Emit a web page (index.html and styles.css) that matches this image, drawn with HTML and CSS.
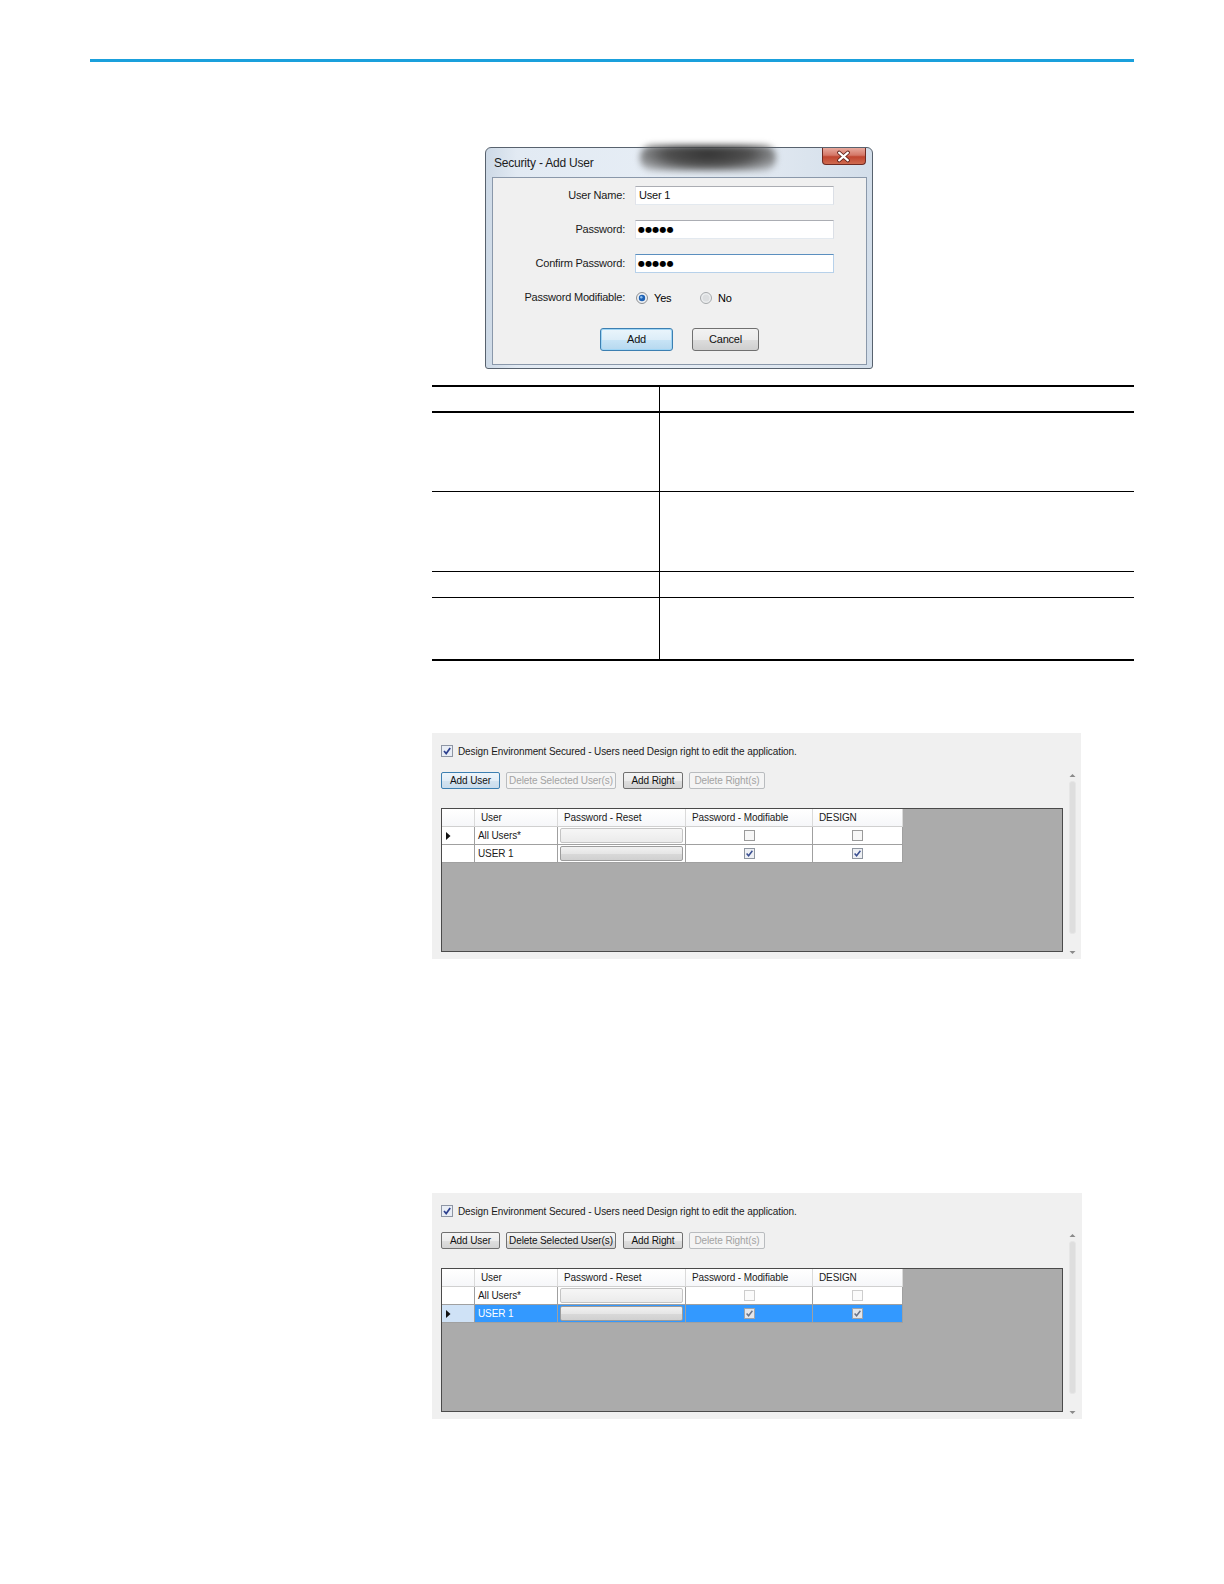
FILE: index.html
```html
<!DOCTYPE html>
<html lang="en">
<head>
<meta charset="utf-8">
<title>Security - Add User</title>
<link rel="stylesheet" href="styles.css">
</head>
<body>
<div class="page">
  <div class="rule"></div>
  <div class="content">

    <div class="dlg">
      <div class="smudge"></div>
      <div class="dlg-title">
        <span class="dlg-caption">Security - Add User</span>
        <div class="dlg-close">
          <svg width="44" height="17" viewBox="0 0 44 17">
            <path d="M17.5 4.5 L26.5 12.5 M26.5 4.5 L17.5 12.5" fill="none" stroke="#5a1e16" stroke-width="4" stroke-linecap="round"/>
            <path d="M17.5 4.5 L26.5 12.5 M26.5 4.5 L17.5 12.5" fill="none" stroke="#ffffff" stroke-width="2.2" stroke-linecap="round"/>
          </svg>
        </div>
      </div>
      <div class="dlg-body">
        <div class="form">
          <label class="lbl">User Name:</label>
          <div class="field">User 1</div>
          <label class="lbl">Password:</label>
          <div class="field dots">●●●●●</div>
          <label class="lbl">Confirm Password:</label>
          <div class="field dots focus">●●●●●</div>
          <label class="lbl">Password Modifiable:</label>
          <div class="radios">
            <div class="opt opt-yes">
              <svg class="radio" width="12" height="12" viewBox="0 0 12 12">
                <circle cx="6" cy="6" r="5.5" fill="#eef0f2" stroke="#8b8e92"/>
                <circle cx="6" cy="6" r="3.2" fill="#1f62b5"/>
                <circle cx="5.3" cy="5.2" r="1.2" fill="#8fc0ee"/>
              </svg>
              <span>Yes</span>
            </div>
            <div class="opt">
              <svg class="radio" width="12" height="12" viewBox="0 0 12 12">
                <circle cx="6" cy="6" r="5.5" fill="#eceeef" stroke="#a5a8ab"/>
                <circle cx="6" cy="6" r="3.5" fill="#dcdee0"/>
              </svg>
              <span>No</span>
            </div>
          </div>
        </div>
        <div class="dlg-buttons">
          <div class="wbtn wbtn-default">Add</div>
          <div class="wbtn wbtn-cancel">Cancel</div>
        </div>
      </div>
    </div>

    <div class="doc-table">
      <div class="dt-row dt-head"><div class="dt-cell"></div><div class="dt-cell"></div></div>
      <div class="dt-row dt-r1"><div class="dt-cell"></div><div class="dt-cell"></div></div>
      <div class="dt-row dt-r2"><div class="dt-cell"></div><div class="dt-cell"></div></div>
      <div class="dt-row dt-r3"><div class="dt-cell"></div><div class="dt-cell"></div></div>
      <div class="dt-row dt-r4 dt-last"><div class="dt-cell"></div><div class="dt-cell"></div></div>
    </div>

    <!-- Screenshot 1 -->
    <div class="shot shot-a">
      <div class="shot-main">
        <div class="secure">
          <svg class="cb" width="12" height="12" viewBox="0 0 12 12">
            <rect x="0.5" y="0.5" width="11" height="11" fill="#e8edf5" stroke="#8e96a4"/>
            <path d="M3 6 L5.2 8.6 L9.2 3" fill="none" stroke="#2c3f8e" stroke-width="1.7"/>
          </svg>
          <span>Design Environment Secured - Users need Design right to edit the application.</span>
        </div>
        <div class="toolbar">
          <div class="sbtn sbtn-focus w-add">Add User</div>
          <div class="sbtn sbtn-off w-del">Delete Selected User(s)</div>
          <div class="sbtn w-right">Add Right</div>
          <div class="sbtn sbtn-off w-delr">Delete Right(s)</div>
        </div>
        <div class="dgv">
          <div class="dgv-row dgv-head">
            <div class="rh"></div>
            <div class="hc">User</div>
            <div class="hc">Password - Reset</div>
            <div class="hc">Password - Modifiable</div>
            <div class="hc">DESIGN</div>
          </div>
          <div class="dgv-row">
            <div class="rh"><svg width="5" height="8" viewBox="0 0 5 8"><path d="M0 0 L4.5 4 L0 8 Z" fill="#111"/></svg></div>
            <div class="tc">All Users*</div>
            <div class="bc"><div class="cellbtn cellbtn-dim"></div></div>
            <div class="cc"><svg width="11" height="11" viewBox="0 0 11 11"><rect x="0.5" y="0.5" width="10" height="10" fill="#f7f7f7" stroke="#9a9a9a"/></svg></div>
            <div class="cc"><svg width="11" height="11" viewBox="0 0 11 11"><rect x="0.5" y="0.5" width="10" height="10" fill="#f7f7f7" stroke="#9a9a9a"/></svg></div>
          </div>
          <div class="dgv-row">
            <div class="rh"></div>
            <div class="tc">USER 1</div>
            <div class="bc"><div class="cellbtn"></div></div>
            <div class="cc"><svg width="11" height="11" viewBox="0 0 11 11"><rect x="0.5" y="0.5" width="10" height="10" fill="#eef0f4" stroke="#8f96a0"/><path d="M2.6 5.4 L4.6 7.8 L8.4 2.8" fill="none" stroke="#3a4f91" stroke-width="1.5"/></svg></div>
            <div class="cc"><svg width="11" height="11" viewBox="0 0 11 11"><rect x="0.5" y="0.5" width="10" height="10" fill="#eef0f4" stroke="#8f96a0"/><path d="M2.6 5.4 L4.6 7.8 L8.4 2.8" fill="none" stroke="#3a4f91" stroke-width="1.5"/></svg></div>
          </div>
        </div>
      </div>
      <div class="vscroll">
        <svg width="9" height="5" viewBox="0 0 9 5"><path d="M1.5 4 L4.5 1 L7.5 4 Z" fill="#8a8a8a"/></svg>
        <div class="thumb"></div>
        <svg width="9" height="5" viewBox="0 0 9 5"><path d="M1.5 1 L4.5 4 L7.5 1 Z" fill="#8a8a8a"/></svg>
      </div>
    </div>

    <!-- Screenshot 2 -->
    <div class="shot shot-b">
      <div class="shot-main">
        <div class="secure">
          <svg class="cb" width="12" height="12" viewBox="0 0 12 12">
            <rect x="0.5" y="0.5" width="11" height="11" fill="#e8edf5" stroke="#8e96a4"/>
            <path d="M3 6 L5.2 8.6 L9.2 3" fill="none" stroke="#2c3f8e" stroke-width="1.7"/>
          </svg>
          <span>Design Environment Secured - Users need Design right to edit the application.</span>
        </div>
        <div class="toolbar">
          <div class="sbtn w-add">Add User</div>
          <div class="sbtn w-del">Delete Selected User(s)</div>
          <div class="sbtn w-right">Add Right</div>
          <div class="sbtn sbtn-off w-delr">Delete Right(s)</div>
        </div>
        <div class="dgv">
          <div class="dgv-row dgv-head">
            <div class="rh"></div>
            <div class="hc">User</div>
            <div class="hc">Password - Reset</div>
            <div class="hc">Password - Modifiable</div>
            <div class="hc">DESIGN</div>
          </div>
          <div class="dgv-row">
            <div class="rh"></div>
            <div class="tc">All Users*</div>
            <div class="bc"><div class="cellbtn cellbtn-dim"></div></div>
            <div class="cc"><svg width="11" height="11" viewBox="0 0 11 11"><rect x="0.5" y="0.5" width="10" height="10" fill="#fbfbfb" stroke="#cdcdcd"/></svg></div>
            <div class="cc"><svg width="11" height="11" viewBox="0 0 11 11"><rect x="0.5" y="0.5" width="10" height="10" fill="#fbfbfb" stroke="#cdcdcd"/></svg></div>
          </div>
          <div class="dgv-row dgv-sel">
            <div class="rh"><svg width="5" height="8" viewBox="0 0 5 8"><path d="M0 0 L4.5 4 L0 8 Z" fill="#111"/></svg></div>
            <div class="tc">USER 1</div>
            <div class="bc"><div class="cellbtn"></div></div>
            <div class="cc"><svg width="11" height="11" viewBox="0 0 11 11"><rect x="0.5" y="0.5" width="10" height="10" fill="#e4e6ea" stroke="#9ea3aa"/><path d="M2.6 5.4 L4.6 7.8 L8.4 2.8" fill="none" stroke="#6a7488" stroke-width="1.5"/></svg></div>
            <div class="cc"><svg width="11" height="11" viewBox="0 0 11 11"><rect x="0.5" y="0.5" width="10" height="10" fill="#e4e6ea" stroke="#9ea3aa"/><path d="M2.6 5.4 L4.6 7.8 L8.4 2.8" fill="none" stroke="#6a7488" stroke-width="1.5"/></svg></div>
          </div>
        </div>
      </div>
      <div class="vscroll">
        <svg width="9" height="5" viewBox="0 0 9 5"><path d="M1.5 4 L4.5 1 L7.5 4 Z" fill="#8a8a8a"/></svg>
        <div class="thumb"></div>
        <svg width="9" height="5" viewBox="0 0 9 5"><path d="M1.5 1 L4.5 4 L7.5 1 Z" fill="#8a8a8a"/></svg>
      </div>
    </div>

  </div>
</div>
</body>
</html>
```

FILE: styles.css
```css
* { box-sizing: border-box; }

html, body {
  margin: 0;
  padding: 0;
  background: #ffffff;
}

body {
  width: 1224px;
  min-height: 1584px;
  font-family: "Liberation Sans", Arial, sans-serif;
  color: #000;
}

.page {
  padding-top: 59px;
}

.rule {
  margin-left: 90px;
  width: 1044px;
  height: 3px;
  background: #1aa0dc;
}

.content {
  margin-left: 432px;
  width: 702px;
}

/* ---------- Dialog ---------- */
.dlg {
  position: relative;
  margin-top: 85px;
  margin-left: 53px;
  width: 388px;
  height: 222px;
  border: 1px solid #58626e;
  border-radius: 6px 6px 3px 3px;
  background: linear-gradient(to right, #cdd9e6 0%, #e2eaf3 8%, #e6edf5 45%, #dfe7f0 75%, #d3deea 100%);
  display: flex;
  flex-direction: column;
  font-size: 11px;
  letter-spacing: -0.2px;
}

.smudge {
  position: absolute;
  left: 154px;
  top: -3px;
  width: 136px;
  height: 26px;
  border-radius: 12px;
  background: radial-gradient(ellipse at 50% 35%, #333 0%, #505050 45%, rgba(120,120,120,0.6) 80%, rgba(200,200,200,0) 100%);
  filter: blur(3px);
}

.dlg-title {
  height: 29px;
  display: flex;
  align-items: flex-start;
}

.dlg-caption {
  padding-left: 8px;
  padding-top: 8px;
  line-height: 14px;
  font-size: 12px;
  letter-spacing: -0.2px;
  color: #1b1b1b;
}

.dlg-close {
  margin-left: auto;
  margin-right: 6px;
  width: 44px;
  height: 17px;
  border: 1px solid #6e2a22;
  border-top: none;
  border-radius: 0 0 4px 4px;
  background: linear-gradient(#e8a99d 0%, #d47767 45%, #c04530 55%, #cf6a4f 100%);
  display: flex;
}

.dlg-close svg { display: block; margin-left: -1px; }

.dlg-body {
  flex: 1;
  margin: 0 5px 3px 6px;
  border: 1px solid #8a98aa;
  background: #f0f0f0;
}

.form {
  display: grid;
  grid-template-columns: 132px 199px;
  grid-auto-rows: 19px;
  column-gap: 10px;
  row-gap: 15px;
  padding-top: 8px;
}

.lbl {
  text-align: right;
  line-height: 19px;
  color: #1a1a1a;
}

.field {
  background: #fff;
  border: 1px solid;
  border-color: #abadb3 #dbdfe6 #e3e9ef #e2e3ea;
  line-height: 17px;
  padding-left: 3px;
  color: #111;
}

.field.focus {
  border-color: #5b8fbf #b7d1ea #b7d1ea #b7d1ea;
}

.dots {
  font-family: "DejaVu Sans", sans-serif;
  font-size: 8px;
  letter-spacing: 0.2px;
  color: #000;
  padding-left: 2px;
}

.radios {
  display: flex;
  align-items: center;
  padding-left: 1px;
}

.opt {
  display: flex;
  align-items: center;
  gap: 6px;
}

.opt-yes { width: 64px; }

.radio { display: block; }

.dlg-buttons {
  display: flex;
  gap: 19px;
  margin-top: 21px;
  padding-left: 107px;
}

.wbtn {
  height: 23px;
  line-height: 21px;
  text-align: center;
  border: 1px solid #707070;
  border-radius: 3px;
  background: linear-gradient(#f2f2f2 0%, #ebebeb 50%, #dddddd 51%, #cfcfcf 100%);
  color: #111;
}

.wbtn-default {
  width: 73px;
  border-color: #3c7fb1;
  box-shadow: inset 0 0 0 1px #9fd5f5;
  background: linear-gradient(#eaf5fc 0%, #dcedf8 50%, #c8e4f6 51%, #b6d8ef 100%);
}

.wbtn-cancel { width: 67px; }

/* ---------- Document table ---------- */
.doc-table {
  margin-top: 16px;
  width: 702px;
  border-top: 2px solid #000;
  border-bottom: 2px solid #000;
}

.dt-row {
  display: grid;
  grid-template-columns: 227px 1fr;
  border-bottom: 1px solid #000;
}

.dt-row.dt-last { border-bottom: none; }
.dt-head { height: 26px; border-bottom-width: 2px; }
.dt-r1 { height: 79px; }
.dt-r2 { height: 80px; }
.dt-r3 { height: 26px; }
.dt-r4 { height: 61px; }

.dt-cell + .dt-cell { border-left: 1px solid #000; }

/* ---------- App screenshots ---------- */
.shot {
  display: flex;
  width: 649px;
  height: 226px;
  background: #f0f0f0;
  font-size: 10px;
  letter-spacing: -0.1px;
  color: #1a1a1a;
}

.shot-a { margin-top: 72px; }
.shot-b { margin-top: 234px; width: 650px; height: 226px; }

.shot-main {
  width: 631px;
  padding-left: 9px;
}

.secure {
  margin-top: 12px;
  height: 12px;
  display: flex;
  align-items: center;
  gap: 5px;
  white-space: nowrap;
}

.cb { display: block; flex: none; }

.toolbar {
  margin-top: 15px;
  height: 17px;
  display: flex;
}

.sbtn {
  height: 17px;
  line-height: 15px;
  text-align: center;
  white-space: nowrap;
  border: 1px solid #707070;
  border-radius: 2px;
  background: linear-gradient(#f4f4f4 0%, #ececec 50%, #dfdfdf 51%, #d3d3d3 100%);
  color: #111;
}

.sbtn-focus {
  border-color: #3c7fb1;
  background: linear-gradient(#eef5fb 0%, #e2edf6 50%, #d3e3f0 51%, #c9dcec 100%);
}

.sbtn-off {
  border-color: #b9bcbf;
  background: #f4f4f4;
  color: #a3a3a3;
}

.w-add { width: 59px; }
.w-del { width: 110px; margin-left: 6px; }
.w-right { width: 60px; margin-left: 7px; }
.w-delr { width: 76px; margin-left: 6px; }

.dgv {
  margin-top: 19px;
  width: 622px;
  height: 144px;
  border: 1px solid #4a4a4a;
  background: #ababab;
}

.dgv-row {
  display: grid;
  grid-template-columns: 33px 83px 128px 127px 90px;
  width: 461px;
  height: 18px;
}

.dgv-row > div {
  border-right: 1px solid #a0a0a0;
  border-bottom: 1px solid #a0a0a0;
  background: #fff;
  display: flex;
  align-items: center;
  white-space: nowrap;
}

.dgv-head > div {
  border-right-color: #dadada;
  border-bottom-color: #d0d0d0;
  background: linear-gradient(#ffffff, #f6f7f9);
}

.hc { padding-left: 6px; }
.tc { padding-left: 3px; }

.rh { padding-left: 4px; }
.rh svg { display: block; }

.bc { padding: 1px 2px 1px 2px; }

.cellbtn {
  width: 100%;
  height: 15px;
  border: 1px solid #9c9c9c;
  border-radius: 2px;
  background: linear-gradient(#f1f1f1 0%, #e6e6e6 50%, #d9d9d9 51%, #d0d0d0 100%);
}

.cellbtn-dim {
  border-color: #c4c4c4;
  background: linear-gradient(#f6f6f6, #ebebeb);
}

.cc { justify-content: center; }
.cc svg { display: block; }

.dgv-sel > div {
  background: #3399ff;
  color: #fff;
}

.dgv-sel > .rh {
  background: #cfe2f6;
}

.vscroll {
  margin-left: 5px;
  margin-top: 40px;
  width: 9px;
  height: 182px;
  display: flex;
  flex-direction: column;
  align-items: center;
}

.vscroll svg { display: block; flex: none; }

.thumb {
  margin-top: 3px;
  width: 7px;
  height: 153px;
  border-radius: 3px;
  background: #dedede;
  border: 1px solid #e6e6e6;
}

.vscroll svg:last-child { margin-top: auto; }
```
